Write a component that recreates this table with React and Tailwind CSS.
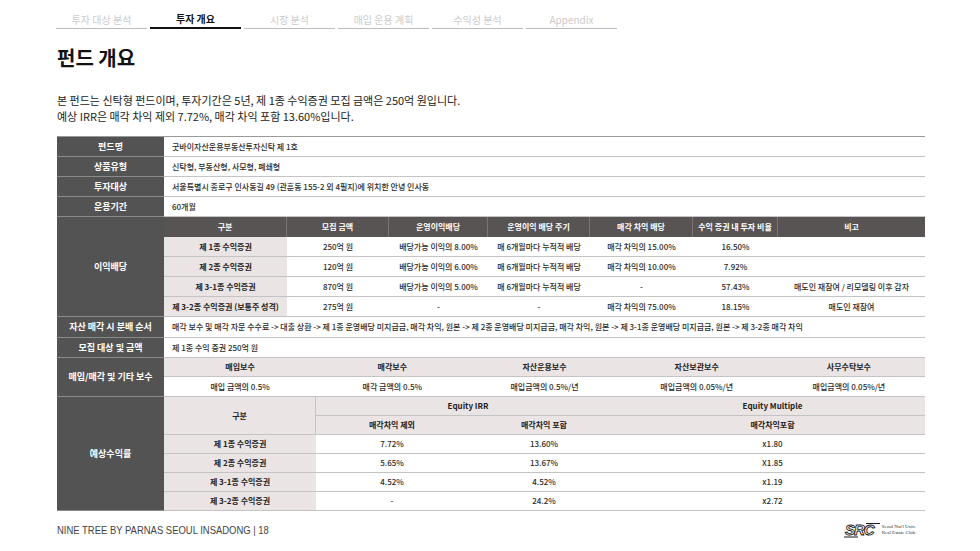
const tabs = ['투자 대상 분석', '투자 개요', '시장 분석', '매입 운용 계획', '수익성 분석', 'Appendix'];

const infoRows = [
    ['펀드명', '굿바이자산운용부동산투자신탁 제 1호'],
    ['상품유형', '신탁형, 부동산형, 사모형, 폐쇄형'],
    ['투자대상', '서울특별시 종로구 인사동길 49 (관훈동 155-2 외 4필지)에 위치한 안녕 인사동'],
    ['운용기간', '60개월'],
];

const divCols = ['w-[123px]', 'w-[102px]', 'w-[99px]', 'w-[102px]', 'w-[103px]', 'w-[85px]', 'w-[147px]'];
const divHead = ['구분', '모집 금액', '운영이익배당', '운영이익 배당 주기', '매각 차익 배당', '수익 증권 내 투자 비율', '비고'];
const divRows = [
    ['제 1종 수익증권', '250억 원', '배당가능 이익의 8.00%', '매 6개월마다 누적적 배당', '매각 차익의 15.00%', '16.50%', ''],
    ['제 2종 수익증권', '120억 원', '배당가능 이익의 6.00%', '매 6개월마다 누적적 배당', '매각 차익의 10.00%', '7.92%', ''],
    ['제 3-1종 수익증권', '870억 원', '배당가능 이익의 5.00%', '매 6개월마다 누적적 배당', '-', '57.43%', '매도인 재참여 / 리모델링 이후 감자'],
    ['제 3-2종 수익증권 (보통주 성격)', '275억 원', '-', '-', '매각 차익의 75.00%', '18.15%', '매도인 재참여'],
];

const feeHead = ['매입보수', '매각보수', '자산운용보수', '자산보관보수', '사무수탁보수'];
const feeVals = ['매입 금액의 0.5%', '매각 금액의 0.5%', '매입금액의 0.5%/년', '매입금액의 0.05%/년', '매입금액의 0.05%/년'];

const returnRows = [
    ['제 1종 수익증권', '7.72%', '13.60%', 'x1.80'],
    ['제 2종 수익증권', '5.65%', '13.67%', 'X1.85'],
    ['제 3-1종 수익증권', '4.52%', '4.52%', 'x1.19'],
    ['제 3-2종 수익증권', '-', '24.2%', 'x2.72'],
];

function Label({ children }) {
    return (
        <div className="w-[107px] shrink-0 bg-[#535353] border-b border-[#8a8a8a] flex items-center justify-center text-white font-bold text-[9px]">
            {children}
        </div>
    );
}

function SrcLogo() {
    return (
        <div className="flex items-center gap-[2px]">
            <svg width="36" height="16" viewBox="0 0 36 16">
                <text x="1" y="13" fontSize="15" fontStyle="italic" fontWeight="bold" fontFamily="Liberation Sans, sans-serif" fill="none" stroke="#1a1a1a" strokeWidth="0.9" letterSpacing="-1">SRC</text>
                <line x1="0" y1="15" x2="14" y2="15" stroke="#1a1a1a" strokeWidth="1" />
                <line x1="22" y1="1.5" x2="36" y2="1.5" stroke="#1a1a1a" strokeWidth="1" />
            </svg>
            <div className="font-['Liberation_Serif',serif] text-[5px] leading-[6px] text-[#333]">
                <div>Seoul Nat'l Univ.</div>
                <div>Real Estate Club</div>
            </div>
        </div>
    );
}

export default function App() {
    return (
        <div className="w-[980px] h-[551px] bg-white overflow-hidden font-['Noto_Sans_CJK_KR',sans-serif] text-[#2a2a2a]">
            {/* Top tabs */}
            <div className="flex gap-[3px] pl-[56px] pt-[10px]">
                {tabs.map((t, i) => (
                    <div
                        key={t}
                        className={i === 1
                            ? 'w-[91px] h-[19px] flex items-center justify-center text-[10px] font-bold text-[#111] border-b-2 border-[#111]'
                            : 'w-[91px] h-[19px] flex items-center justify-center text-[10px] text-[#cbcbcb] border-b border-[#bdbdbd]'}
                    >
                        {t}
                    </div>
                ))}
            </div>

            <div className="pl-[57px]">
                <h1 className="mt-[17px] text-[20px] leading-[24px] font-bold text-[#111]">펀드 개요</h1>
                <div className="mt-[22px] text-[11px] leading-[16px] text-[#222]">
                    <p>본 펀드는 신탁형 펀드이며, 투자기간은 5년, 제 1종 수익증권 모집 금액은 250억 원입니다.</p>
                    <p>예상 IRR은 매각 차익 제외 7.72%, 매각 차익 포함 13.60%입니다.</p>
                </div>

                {/* Table */}
                <div className="mt-[12px] w-[868px] border-t border-[#9a9a9a] text-[8px] font-medium text-[#2a2a2a]">
                    {infoRows.map(([k, v]) => (
                        <div key={k} className="flex h-[20px]">
                            <Label>{k}</Label>
                            <div className="flex-1 border-b border-[#c4c4c4] flex items-center pl-[8px]">{v}</div>
                        </div>
                    ))}

                    {/* 이익배당 */}
                    <div className="flex">
                        <Label>이익배당</Label>
                        <div className="flex-1">
                            <div className="flex h-[20px] bg-[#585454] text-white font-bold">
                                {divHead.map((h, i) => (
                                    <div key={h} className={`${divCols[i]} flex items-center justify-center ${i < 6 ? 'border-r border-[#7a7676]' : ''}`}>{h}</div>
                                ))}
                            </div>
                            {divRows.map((r) => (
                                <div key={r[0]} className="flex h-[20px] border-b border-[#c4c4c4]">
                                    {r.map((c, i) => (
                                        <div key={i} className={`${divCols[i]} flex items-center justify-center ${i === 0 ? 'bg-[#ebe4e4] font-bold text-[#222]' : ''}`}>{c}</div>
                                    ))}
                                </div>
                            ))}
                        </div>
                    </div>

                    <div className="flex h-[21px]">
                        <Label>자산 매각 시 분배 순서</Label>
                        <div className="flex-1 border-b border-[#c4c4c4] flex items-center pl-[8px]">
                            매각 보수 및 매각 자문 수수료 -&gt; 대출 상환 -&gt; 제 1종 운영배당 미지급금, 매각 차익, 원본 -&gt; 제 2종 운영배당 미지급금, 매각 차익, 원본 -&gt; 제 3-1종 운영배당 미지급금, 원본 -&gt; 제 3-2종 매각 차익
                        </div>
                    </div>
                    <div className="flex h-[20px]">
                        <Label>모집 대상 및 금액</Label>
                        <div className="flex-1 border-b border-[#c4c4c4] flex items-center pl-[8px]">제 1종 수익 증권 250억 원</div>
                    </div>

                    {/* 보수 */}
                    <div className="flex">
                        <Label>매입/매각 및 기타 보수</Label>
                        <div className="flex-1">
                            <div className="grid grid-cols-5 h-[19px] bg-[#ebe4e4] border-b border-[#c4c4c4] font-bold text-[#222]">
                                {feeHead.map((h) => (
                                    <div key={h} className="flex items-center justify-center">{h}</div>
                                ))}
                            </div>
                            <div className="grid grid-cols-5 h-[20px] border-b border-[#c4c4c4]">
                                {feeVals.map((v, i) => (
                                    <div key={i} className="flex items-center justify-center">{v}</div>
                                ))}
                            </div>
                        </div>
                    </div>

                    {/* 예상수익률 */}
                    <div className="flex">
                        <Label>예상수익률</Label>
                        <div className="flex-1 grid grid-cols-[152px_152px_152px_305px] auto-rows-[19px]">
                            <div className="row-span-2 bg-[#ebe4e4] border-r border-[#8f8a8a] border-b border-[#c4c4c4] flex items-center justify-center font-bold text-[#222]">구분</div>
                            <div className="col-span-2 bg-[#ebe4e4] border-b border-[#c4c4c4] flex items-center justify-center font-bold text-[#222]">Equity IRR</div>
                            <div className="bg-[#ebe4e4] border-b border-[#c4c4c4] flex items-center justify-center font-bold text-[#222]">Equity Multiple</div>
                            <div className="bg-[#ebe4e4] border-b border-[#c4c4c4] flex items-center justify-center font-bold text-[#222]">매각차익 제외</div>
                            <div className="bg-[#ebe4e4] border-b border-[#c4c4c4] flex items-center justify-center font-bold text-[#222]">매각차익 포함</div>
                            <div className="bg-[#ebe4e4] border-b border-[#c4c4c4] flex items-center justify-center font-bold text-[#222]">매각차익포함</div>
                            {returnRows.map((r) =>
                                r.map((c, i) => (
                                    <div key={r[0] + i} className={`border-b border-[#c4c4c4] flex items-center justify-center ${i === 0 ? 'bg-[#ebe4e4] font-bold text-[#222]' : ''}`}>{c}</div>
                                ))
                            )}
                        </div>
                    </div>
                </div>
            </div>

            {/* Footer */}
            <div className="flex items-center justify-between pl-[57px] pr-[64px] mt-[11px]">
                <div className="origin-left scale-x-[0.86] font-['Liberation_Sans',sans-serif] text-[11px] text-[#444] whitespace-nowrap">
                    NINE TREE BY PARNAS SEOUL INSADONG | 18
                </div>
                <SrcLogo />
            </div>
        </div>
    );
}
